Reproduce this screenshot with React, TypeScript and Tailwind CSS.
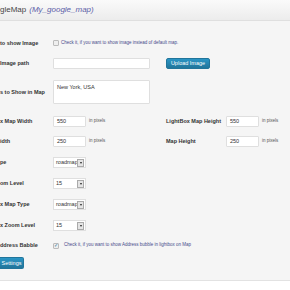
import { ReactNode } from "react";

const font = { fontFamily: '"Liberation Sans", Arial, sans-serif' };

function Label(props: { children: ReactNode; w?: string }) {
  return (
    <div className={`${props.w ?? "w-[53px]"} shrink-0 whitespace-nowrap text-[5.5px] font-bold text-[#333]`}>
      {props.children}
    </div>
  );
}

function Pixels(props: { value: string }) {
  return (
    <div className="flex items-center">
      <div className="flex h-[11px] w-[33px] items-center rounded-[1px] border border-[#dfdfdf] bg-white pl-[3px] text-[5.5px] text-[#333]">
        {props.value}
      </div>
      <span className="ml-[3px] text-[4.5px] text-[#555]">in pixels</span>
    </div>
  );
}

function Select(props: { value: string }) {
  return (
    <div className="flex h-[11px] w-[33px] items-center border border-[#dfdfdf] bg-white">
      <span className="flex-1 overflow-hidden whitespace-nowrap pl-[2px] text-[5.5px] text-[#333]">{props.value}</span>
      <span className="mr-[1px] flex h-[8px] w-[7px] items-center justify-center border border-[#aaa] bg-[#e4e4e4]">
        <span className="h-0 w-0 border-x-[1.5px] border-t-[2px] border-x-transparent border-t-[#222]" />
      </span>
    </div>
  );
}

function Checkbox(props: { checked?: boolean }) {
  return (
    <div className="flex h-[6px] w-[6px] items-center justify-center rounded-[1px] border border-[#bbb] bg-[#eee] text-[5px] leading-none text-[#21759b]">
      {props.checked ? "✓" : ""}
    </div>
  );
}

function Button(props: { children: ReactNode; className?: string }) {
  return (
    <div
      className={`flex items-center justify-center rounded-[2px] border border-[#21759b] bg-gradient-to-b from-[#2a95c5] to-[#21759b] text-[5.5px] text-white ${props.className ?? ""}`}
    >
      {props.children}
    </div>
  );
}

export default function App() {
  return (
    <div className="h-[290px] w-[290px] overflow-hidden bg-white" style={font}>
      <div className="bg-[#f5f5f5]">
        <div className="flex h-[21px] items-center border-b border-[#dfdfdf] bg-gradient-to-b from-[#fafafa] to-[#ececec]">
          <span className="text-[8px] text-[#464646]">gleMap</span>
          <span className="ml-[3px] text-[8px] italic text-[#5c60a8]">(My_google_map)</span>
        </div>

        <div className="pt-[12px]">
          <div className="flex h-[20px] items-center">
            <Label>to show Image</Label>
            <Checkbox />
            <span className="ml-[2px] text-[4.5px] text-[#464a8a]">
              Check it, if you want to show image instead of default map.
            </span>
          </div>

          <div className="flex h-[20px] items-center">
            <Label>Image path</Label>
            <div className="h-[11px] w-[97px] rounded-[1px] border border-[#dfdfdf] bg-white" />
            <Button className="ml-[16px] h-[11px] w-[44px]">Upload Image</Button>
          </div>

          <div className="flex h-[38px] items-center">
            <Label>s to Show in Map</Label>
            <div className="h-[24px] w-[97px] rounded-[1px] border border-[#dfdfdf] bg-white pl-[3px] pt-[2px] text-[5.5px] text-[#333]">
              New York, USA
            </div>
          </div>

          <div className="flex h-[20px] items-center">
            <Label>x Map Width</Label>
            <div className="w-[113px]">
              <Pixels value="550" />
            </div>
            <Label w="w-[60px]">LightBox Map Height</Label>
            <Pixels value="550" />
          </div>

          <div className="flex h-[21px] items-center">
            <Label>idth</Label>
            <div className="w-[113px]">
              <Pixels value="250" />
            </div>
            <Label w="w-[60px]">Map Height</Label>
            <Pixels value="250" />
          </div>

          <div className="flex h-[21px] items-center">
            <Label>pe</Label>
            <Select value="roadmap" />
          </div>

          <div className="flex h-[21px] items-center">
            <Label>om Level</Label>
            <Select value="15" />
          </div>

          <div className="flex h-[21px] items-center">
            <Label>x Map Type</Label>
            <Select value="roadmap" />
          </div>

          <div className="flex h-[21px] items-center">
            <Label>x Zoom Level</Label>
            <Select value="15" />
          </div>

          <div className="flex h-[19px] items-center">
            <Label>ddress Babble</Label>
            <Checkbox checked />
            <span className="ml-[5px] text-[4.5px] text-[#464a8a]">
              Check it, if you want to show Address bubble in lightbox on Map
            </span>
          </div>

          <div className="pb-[11px] pt-[2px]">
            <Button className="h-[12px] w-[24px] rounded-l-none border-l-0">Settings</Button>
          </div>
        </div>
        <div className="border-b border-[#e2e2e2]" />
      </div>
    </div>
  );
}
